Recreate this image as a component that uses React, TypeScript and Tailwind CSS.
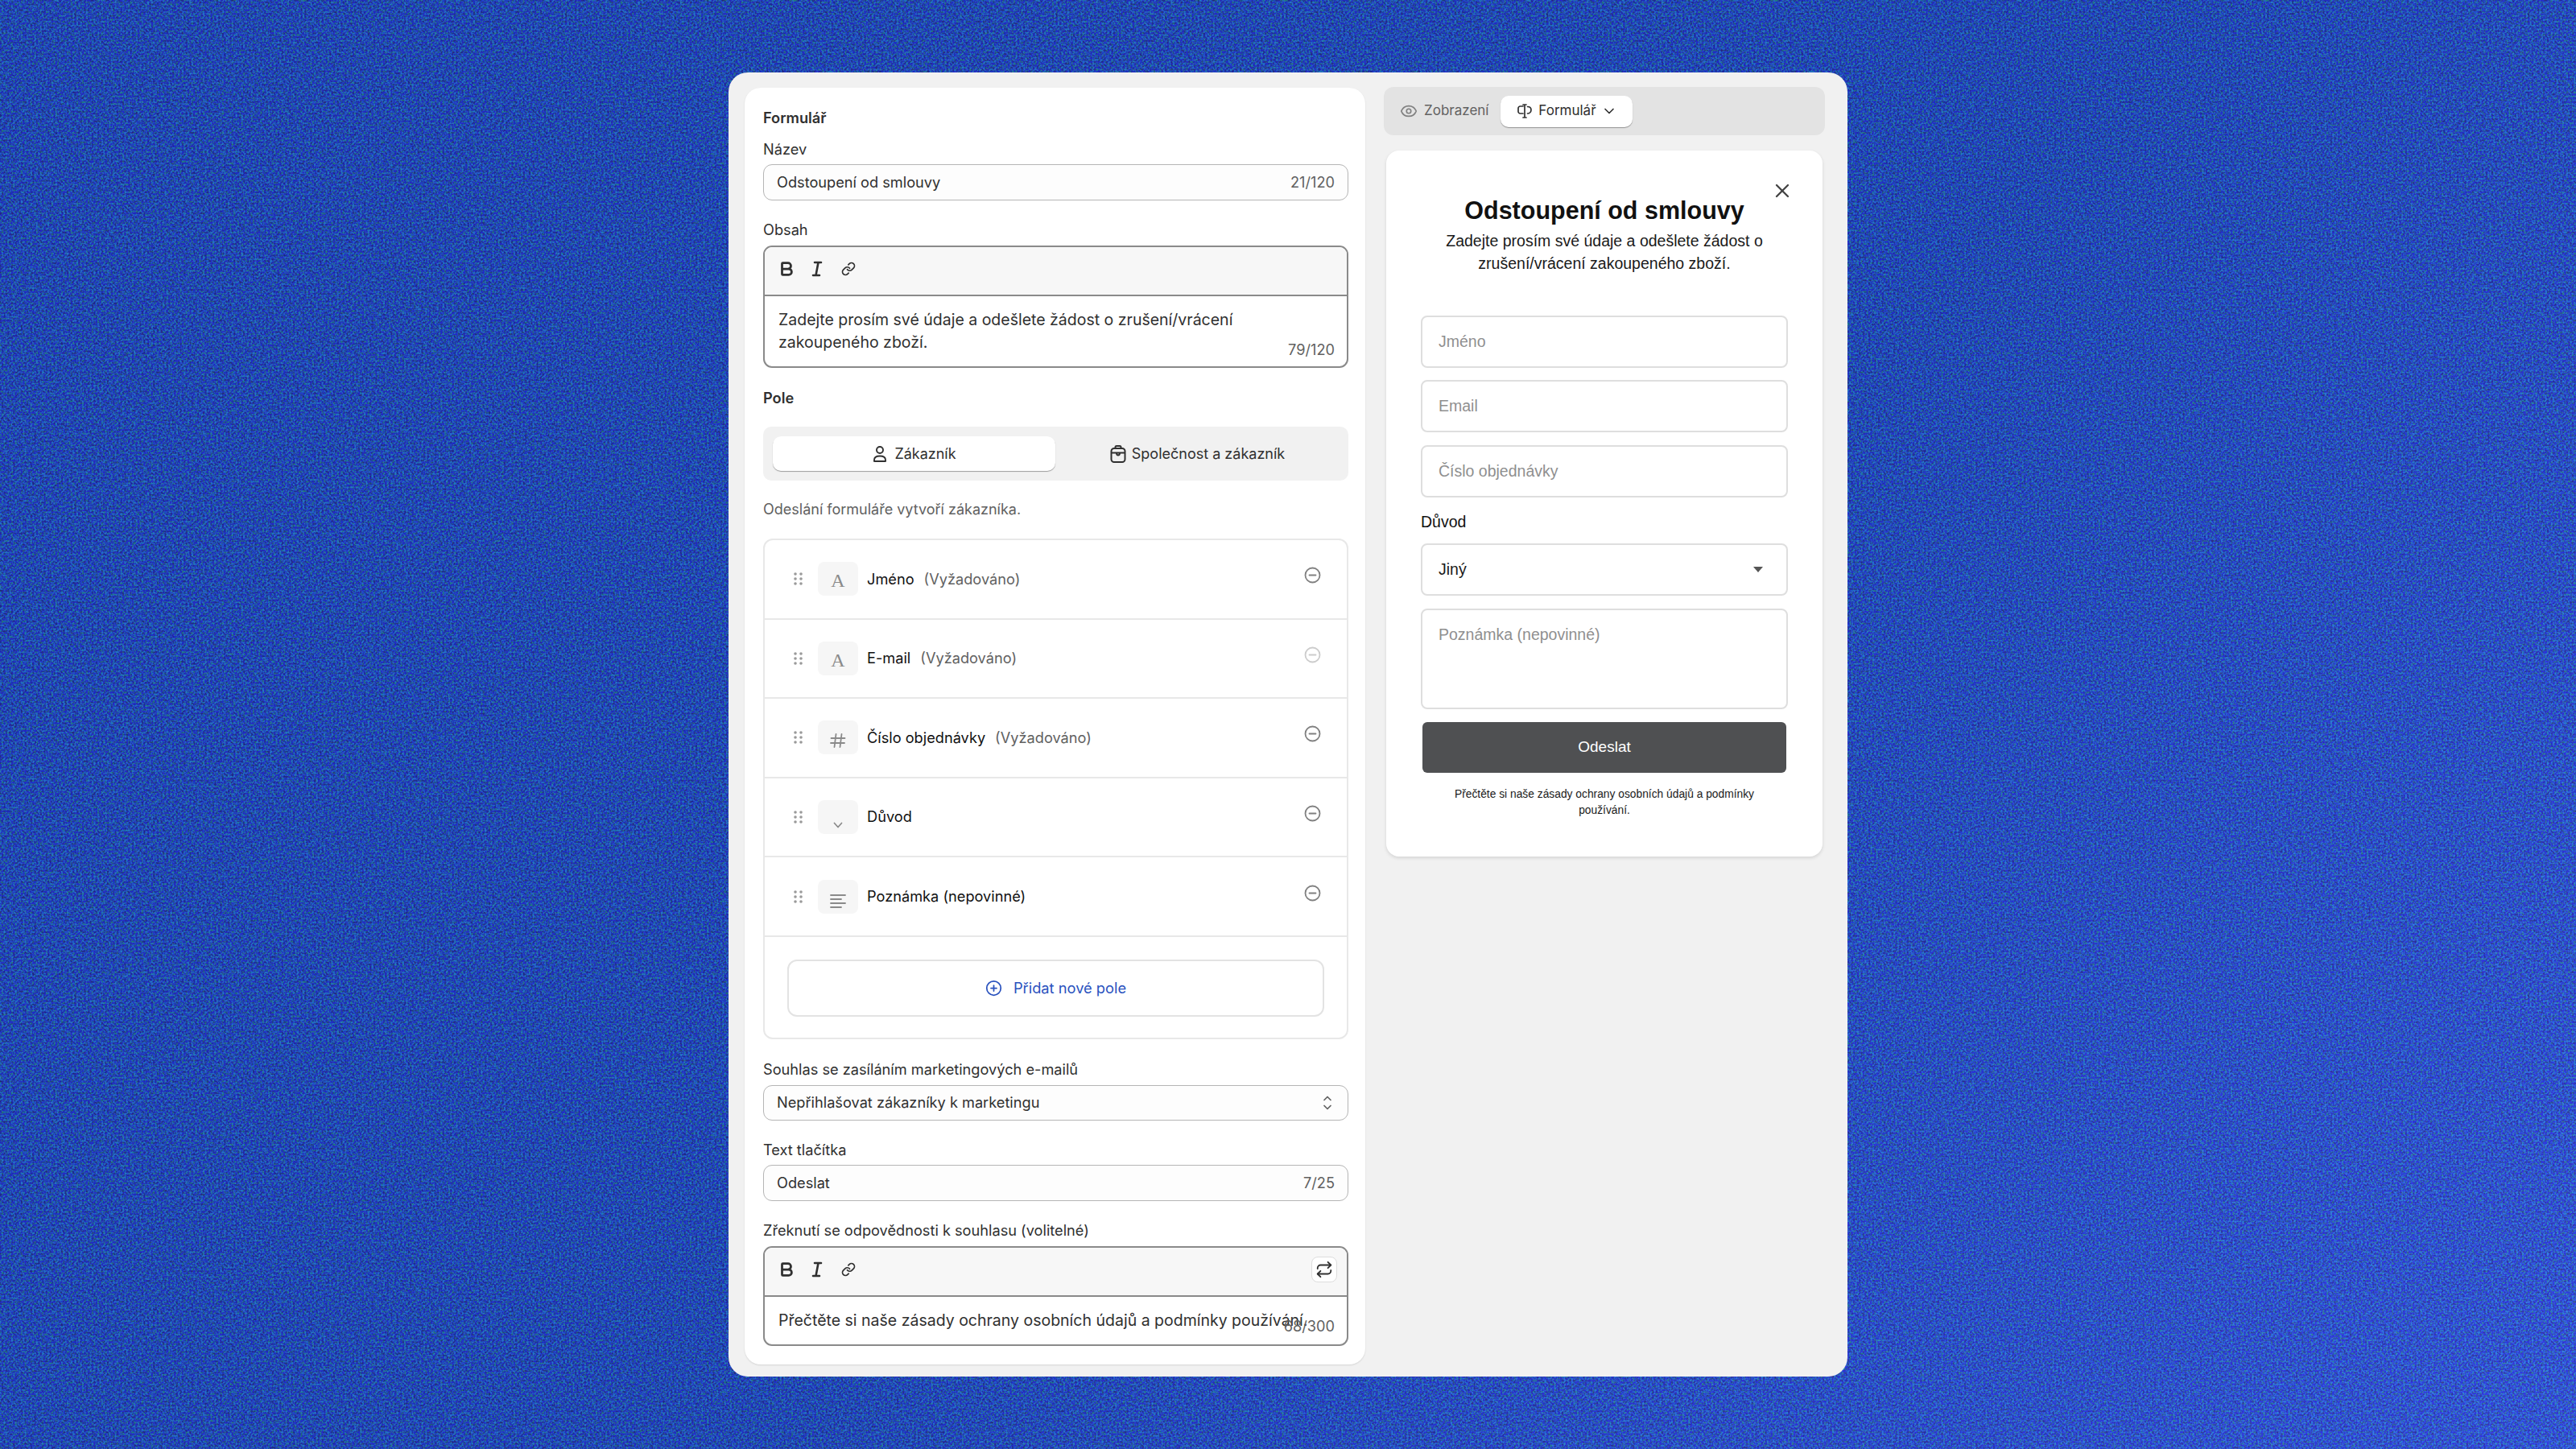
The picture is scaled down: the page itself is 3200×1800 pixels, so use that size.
import { Bold, ChevronDown, CirclePlus, Eye, Link, Repeat, X } from 'lucide-react';
import type { ReactNode } from 'react';

function FieldLabel({ children, className = '' }: { children: ReactNode; className?: string }) {
  return <div className={`h-6 text-[18.2px] leading-6 text-[#303030] ${className}`}>{children}</div>;
}

function TextField({ value, count }: { value: string; count: string }) {
  return (
    <div className="mt-[7px] flex h-[45px] items-center justify-between rounded-[11px] border border-[#b5b5b5] bg-[#fdfdfd] pl-4 pr-4 text-[18.2px]">
      <span className="text-[#303030]">{value}</span>
      <span className="text-[#616161]">{count}</span>
    </div>
  );
}

function ItalicIcon() {
  return (
    <svg width="22" height="22" viewBox="0 0 22 22" fill="none" stroke="#303030" strokeWidth="2.6" strokeLinecap="round">
      <path d="M8 3h8M6 19h8M12.5 3 9.5 19" />
    </svg>
  );
}

function Toolbar({ action }: { action?: ReactNode }) {
  return (
    <div className="flex h-[61px] items-center justify-between border-b-2 border-[#8a8a8a] bg-[#f7f7f7] pb-[6px] pl-[16px] pr-[12px]">
      <div className="flex items-center">
        <Bold size={22} strokeWidth={3} color="#303030" />
        <div className="ml-4">
          <ItalicIcon />
        </div>
        <Link size={18} strokeWidth={2.3} color="#303030" className="ml-[19px]" />
      </div>
      {action}
    </div>
  );
}

function PersonIcon() {
  return (
    <svg width="20" height="22" viewBox="0 0 20 22" fill="none" stroke="#303030" strokeWidth="1.9">
      <circle cx="10" cy="6" r="4" />
      <path d="M3 20v-1.5C3 15 6 13.5 10 13.5s7 1.5 7 5V20Z" strokeLinejoin="round" />
    </svg>
  );
}

function BagIcon() {
  return (
    <svg width="22" height="24" viewBox="0 0 22 24" fill="none" stroke="#303030" strokeWidth="2" strokeLinejoin="round" strokeLinecap="round">
      <rect x="2.5" y="5" width="17" height="17" rx="3.5" />
      <path d="M7.5 5V3.5A1.5 1.5 0 0 1 9 2h4a1.5 1.5 0 0 1 1.5 1.5V5" />
      <path d="M3 10.5h16M9 10.5c0 2 .8 3 2 3s2-1 2-3" />
    </svg>
  );
}

function GripIcon() {
  return (
    <svg width="11" height="16" viewBox="0 0 11 16" fill="#9a9a9a">
      <circle cx="2" cy="2" r="1.8" />
      <circle cx="9" cy="2" r="1.8" />
      <circle cx="2" cy="8" r="1.8" />
      <circle cx="9" cy="8" r="1.8" />
      <circle cx="2" cy="14" r="1.8" />
      <circle cx="9" cy="14" r="1.8" />
    </svg>
  );
}

function MinusCircle({ faded }: { faded?: boolean }) {
  return (
    <svg width="21" height="21" viewBox="0 0 21 21" fill="none" stroke={faded ? '#cccccc' : '#808080'} strokeWidth="1.8" strokeLinecap="round">
      <circle cx="10.5" cy="10.5" r="9" />
      <path d="M6.5 10.5h8" />
    </svg>
  );
}

function HashGlyph() {
  return (
    <svg width="20" height="20" viewBox="0 0 20 20" fill="none" stroke="#8a8a8a" strokeWidth="1.8" strokeLinecap="round">
      <path d="M7.5 2 5.5 18M14.5 2l-2 16M1.5 7h17M1 13h17" />
    </svg>
  );
}

function ChevronGlyph() {
  return (
    <svg width="12" height="8" viewBox="0 0 12 8" fill="none" stroke="#8a8a8a" strokeWidth="1.7" strokeLinecap="round" strokeLinejoin="round">
      <path d="M1.5 1.5 6 6.5l4.5-5" />
    </svg>
  );
}

function LinesGlyph() {
  return (
    <svg width="20" height="18" viewBox="0 0 20 18" fill="none" stroke="#8a8a8a" strokeWidth="1.8" strokeLinecap="round">
      <path d="M1 2h18M1 7h13M1 12h18M1 17h13" />
    </svg>
  );
}

function SerifA() {
  return <span className="font-['Liberation_Serif',serif] text-[24px] leading-none text-[#8a8a8a]">A</span>;
}

const rows: { name: string; required?: boolean; glyph: ReactNode; faded?: boolean }[] = [
  { name: 'Jméno', required: true, glyph: <SerifA /> },
  { name: 'E-mail', required: true, glyph: <SerifA />, faded: true },
  { name: 'Číslo objednávky', required: true, glyph: <HashGlyph /> },
  { name: 'Důvod', glyph: <ChevronGlyph /> },
  { name: 'Poznámka (nepovinné)', glyph: <LinesGlyph /> },
];

function FieldRow({ name, required, glyph, faded }: (typeof rows)[number]) {
  return (
    <div className="flex h-[98.6px] items-center border-b-2 border-[#e8e8e8] pl-[36px] pr-[32px] text-[18.2px]">
      <GripIcon />
      <div className="ml-[19px] flex h-[42px] w-[50px] items-end justify-center rounded-[8px] bg-[#f6f6f6] pb-[7px]">{glyph}</div>
      <span className="ml-[11px] text-[#111111]">{name}</span>
      {required && <span className="ml-3 text-[#616161]">(Vyžadováno)</span>}
      <div className="ml-auto mb-[9px]">
        <MinusCircle faded={faded} />
      </div>
    </div>
  );
}

function EditorPanel() {
  return (
    <div className="mt-px flex h-[1586px] w-[771px] flex-col rounded-[20px] bg-white pl-[23px] pr-[21px] pt-[25px] shadow-[0_1px_2px_rgba(0,0,0,0.12)]">
      <FieldLabel className="font-semibold">Formulář</FieldLabel>
      <FieldLabel className="mt-[15px]">Název</FieldLabel>
      <TextField value="Odstoupení od smlouvy" count="21/120" />

      <FieldLabel className="mt-6">Obsah</FieldLabel>
      <div className="relative mt-2 h-[152px] overflow-hidden rounded-[11px] border-2 border-[#8a8a8a] bg-white">
        <Toolbar />
        <p className="px-[17px] pt-[15px] text-[19.5px] leading-[28px] text-[#303030]">
          Zadejte prosím své údaje a odešlete žádost o zrušení/vrácení
          <br />
          zakoupeného zboží.
        </p>
        <span className="absolute bottom-[7px] right-[15px] text-[18.2px] text-[#616161]">79/120</span>
      </div>

      <FieldLabel className="mt-[25px] font-semibold">Pole</FieldLabel>
      <div className="mt-6 flex h-[67px] items-center rounded-[10px] bg-[#f1f1f1] px-3 text-[18px] text-[#303030]">
        <div className="flex h-[43px] w-[351px] items-center justify-center gap-2 rounded-[10px] bg-white shadow-[0_1px_1px_rgba(0,0,0,0.35)]">
          <PersonIcon />
          Zákazník
        </div>
        <div className="flex h-[43px] flex-1 items-center justify-center gap-1.5">
          <BagIcon />
          Společnost a zákazník
        </div>
      </div>

      <div className="mt-6 h-6 text-[18px] leading-6 text-[#616161]">Odeslání formuláře vytvoří zákazníka.</div>

      <div className="mt-6 flex h-[622px] flex-col rounded-[12px] border-2 border-[#e8e8e8]">
        {rows.map((row) => (
          <FieldRow key={row.name} {...row} />
        ))}
        <div className="mx-[28px] mt-[28px] flex h-[71px] items-center justify-center gap-[14px] rounded-[12px] border-2 border-[#e3e3e3] text-[18.3px] text-[#2a52be]">
          <CirclePlus size={21} strokeWidth={2} />
          Přidat nové pole
        </div>
      </div>

      <FieldLabel className="mt-[25px]">Souhlas se zasíláním marketingových e-mailů</FieldLabel>
      <div className="mt-2 flex h-[44px] items-center justify-between rounded-[11px] border border-[#b5b5b5] bg-[#fdfdfd] pl-4 pr-[19px] text-[18.2px] text-[#303030]">
        Nepřihlašovat zákazníky k marketingu
        <svg width="12" height="18" viewBox="0 0 12 18" fill="none" stroke="#616161" strokeWidth="1.7" strokeLinecap="round" strokeLinejoin="round">
          <path d="M2 5.5 6 1.5l4 4M2 12.5l4 4 4-4" />
        </svg>
      </div>

      <FieldLabel className="mt-6">Text tlačítka</FieldLabel>
      <TextField value="Odeslat" count="7/25" />

      <FieldLabel className="mt-6">Zřeknutí se odpovědnosti k souhlasu (volitelné)</FieldLabel>
      <div className="relative mt-2 h-[124px] overflow-hidden rounded-[11px] border-2 border-[#8a8a8a] bg-white">
        <Toolbar
          action={
            <div className="flex h-8 w-8 items-center justify-center rounded-[8px] border border-[#dddddd] bg-white">
              <Repeat size={22} strokeWidth={2} color="#303030" />
            </div>
          }
        />
        <p className="whitespace-nowrap px-[17px] pt-[15px] text-[19.5px] leading-[28px] text-[#303030]">
          Přečtěte si naše zásady ochrany osobních údajů a podmínky používání.
        </p>
        <span className="absolute bottom-[9px] right-[15px] text-[18.2px] text-[#616161]">68/300</span>
      </div>
    </div>
  );
}

function PreviewField({ text, className = 'h-[65px]' }: { text: string; className?: string }) {
  return (
    <div className={`flex items-center rounded-[8px] border-2 border-[#dedede] pl-[20px] text-[19.5px] text-[#8f8f8f] ${className}`}>{text}</div>
  );
}

function PreviewPanel() {
  return (
    <div className="flex w-[548px] flex-col">
      <div className="flex h-[60px] items-center rounded-[12px] bg-[#e3e3e3] pl-5 text-[17px]">
        <Eye size={22} strokeWidth={1.8} color="#808080" />
        <span className="ml-2 text-[#616161]">Zobrazení</span>
        <div className="ml-[15px] flex h-[39px] w-[164px] items-center justify-center rounded-[10px] bg-white text-[#303030] shadow-[0_1px_1px_rgba(0,0,0,0.35)]">
          <svg width="22" height="20" viewBox="0 0 22 20" fill="none" stroke="#303030" strokeWidth="1.7" strokeLinecap="round" strokeLinejoin="round">
            <path d="M8 4H4.5A2.5 2.5 0 0 0 2 6.500v4A2.500 2.500 0 0 0 4.500 13H8M10 2v16M8 2h4M8 18h4M13.500 4.500c2.500 0 4.500 1.500 4.500 4s-2 4.500-4.500 4.500" />
          </svg>
          <span className="ml-[5px]">Formulář</span>
          <ChevronDown size={20} strokeWidth={2} className="ml-[6px]" />
        </div>
      </div>

      <div className="relative mx-[3px] mt-[19px] flex h-[877px] flex-col rounded-[16px] bg-white px-[43px] pt-[56px] font-['Liberation_Sans',sans-serif] shadow-[0_2px_4px_rgba(0,0,0,0.12)]">
        <X size={28} strokeWidth={2} color="#444444" className="absolute right-[36px] top-[36px]" />
        <h1 className="text-center text-[30.5px] font-bold leading-[36px] text-[#111111]">Odstoupení od smlouvy</h1>
        <p className="mx-auto mt-[6px] w-[420px] text-center text-[19.5px] leading-[28px] text-[#1a1a1a]">
          Zadejte prosím své údaje a odešlete žádost o zrušení/vrácení zakoupeného zboží.
        </p>
        <PreviewField text="Jméno" className="mt-[51px] h-[65px]" />
        <PreviewField text="Email" className="mt-[15px] h-[65px]" />
        <PreviewField text="Číslo objednávky" className="mt-[16px] h-[65px]" />
        <div className="mt-[18px] h-6 text-[19.5px] leading-6 text-[#111111]">Důvod</div>
        <div className="mt-[15px] flex h-[65px] items-center justify-between rounded-[8px] border-2 border-[#dedede] pl-[20px] pr-[29px] text-[19.5px] text-[#1a1a1a]">
          Jiný
          <svg width="12" height="7" viewBox="0 0 12 7" fill="#555555">
            <path d="M0 0h12L6 7Z" />
          </svg>
        </div>
        <div className="mt-[16px] flex h-[125px] rounded-[8px] border-2 border-[#dedede] pl-[20px] pt-[16px] text-[19.5px] leading-[28px] text-[#8f8f8f]">
          Poznámka (nepovinné)
        </div>
        <div className="mx-[2px] mt-[16px] flex h-[63px] items-center justify-center rounded-[6px] bg-[#4f5052] text-[19px] text-white">Odeslat</div>
        <p className="mx-auto mt-[17px] w-[400px] text-center text-[13.8px] leading-[19.5px] text-[#1a1a1a]">
          Přečtěte si naše zásady ochrany osobních údajů a podmínky používání.
        </p>
      </div>
    </div>
  );
}

export default function App() {
  return (
    <div className="relative flex h-[1800px] w-[3200px] items-center justify-center overflow-hidden bg-[linear-gradient(135deg,#1a3bab_0%,#1b3eb0_55%,#3450da_100%)] font-['Inter',sans-serif]">
      {/* grain over the blue backdrop */}
      <svg className="absolute inset-0 h-full w-full" aria-hidden="true">
        <filter id="grain" x="0" y="0" width="100%" height="100%" colorInterpolationFilters="sRGB">
          <feTurbulence type="fractalNoise" baseFrequency="0.42" numOctaves="2" seed="11" />
          <feColorMatrix values="0.4 0 0 0 0  0 3 0 0 -1.12  0 0 3.2 0 -0.85  0 0 0 0 0.3" />
        </filter>
        <rect width="100%" height="100%" filter="url(#grain)" />
      </svg>
      <div className="relative flex h-[1620px] w-[1390px] gap-[23px] rounded-[24px] bg-[#f1f1f1] pl-5 pt-[18px]">
        <EditorPanel />
        <PreviewPanel />
      </div>
    </div>
  );
}
